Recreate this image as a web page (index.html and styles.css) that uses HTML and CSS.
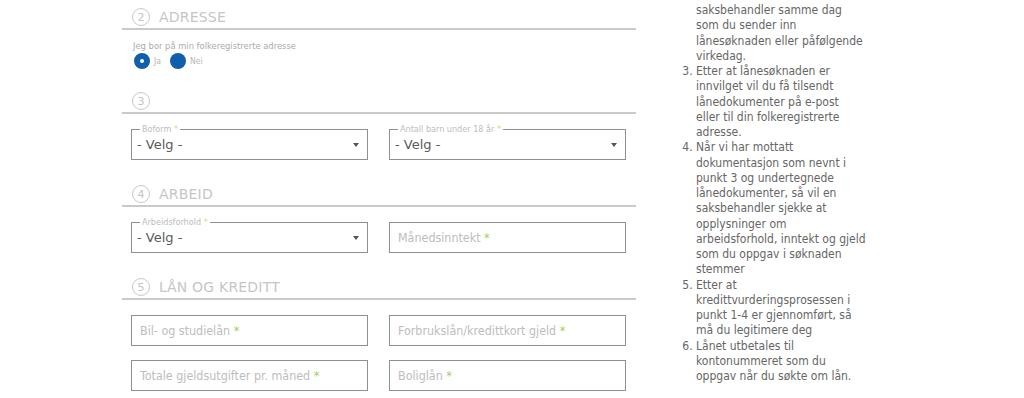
FILE: index.html
```html
<!DOCTYPE html>
<html lang="no">
<head>
<meta charset="utf-8">
<title>Lånesøknad</title>
<link rel="stylesheet" href="styles.css">
</head>
<body>
<div class="page">
  <form class="form">
    <div class="sec-head"><span class="num">2</span><h2>ADRESSE</h2></div>
    <p class="q">Jeg bor på min folkeregistrerte adresse</p>
    <div class="radios">
      <label class="radio"><span class="dot on"></span>Ja</label>
      <label class="radio"><span class="dot"></span>Nei</label>
    </div>

    <div class="sec-head"><span class="num">3</span></div>
    <div class="row">
      <div class="field select"><span class="flabel">Boform <b>*</b></span><span class="val">- Velg -</span><span class="caret"></span></div>
      <div class="field select"><span class="flabel">Antall barn under 18 år <b>*</b></span><span class="val">- Velg -</span><span class="caret"></span></div>
    </div>

    <div class="sec-head"><span class="num">4</span><h2>ARBEID</h2></div>
    <div class="row">
      <div class="field select"><span class="flabel">Arbeidsforhold <b>*</b></span><span class="val">- Velg -</span><span class="caret"></span></div>
      <div class="field"><span class="ph">Månedsinntekt <b>*</b></span></div>
    </div>

    <div class="sec-head"><span class="num">5</span><h2>LÅN OG KREDITT</h2></div>
    <div class="row">
      <div class="field"><span class="ph">Bil- og studielån <b>*</b></span></div>
      <div class="field"><span class="ph">Forbrukslån/kredittkort gjeld <b>*</b></span></div>
      <div class="field"><span class="ph">Totale gjeldsutgifter pr. måned <b>*</b></span></div>
      <div class="field"><span class="ph">Boliglån <b>*</b></span></div>
    </div>
  </form>

  <aside class="steps">
    <p class="cont">saksbehandler samme dag<br>som du sender inn<br>lånesøknaden eller påfølgende<br>virkedag.</p>
    <ol start="3">
      <li>Etter at lånesøknaden er<br>innvilget vil du få tilsendt<br>lånedokumenter på e-post<br>eller til din folkeregistrerte<br>adresse.</li>
      <li>Når vi har mottatt<br>dokumentasjon som nevnt i<br>punkt 3 og undertegnede<br>lånedokumenter, så vil en<br>saksbehandler sjekke at<br>opplysninger om<br>arbeidsforhold, inntekt og gjeld<br>som du oppgav i søknaden<br>stemmer</li>
      <li>Etter at<br>kredittvurderingsprosessen i<br>punkt 1-4 er gjennomført, så<br>må du legitimere deg</li>
      <li>Lånet utbetales til<br>kontonummeret som du<br>oppgav når du søkte om lån.</li>
    </ol>
  </aside>
</div>
</body>
</html>
```

FILE: styles.css
```css
body {
  margin: 0;
  background: #fff;
  font-family: "DejaVu Sans Condensed", "DejaVu Sans", sans-serif;
}

.page {
  display: flex;
  align-items: flex-start;
  padding-left: 122px;
}

.form {
  width: 514px;
  padding-top: 8px;
  margin: 0;
}

.sec-head {
  display: flex;
  align-items: center;
  gap: 9px;
  height: 18px;
  padding: 0 0 2px 10px;
  border-bottom: 2px solid #cacaca;
}

.num {
  width: 16px;
  height: 16px;
  border: 1px solid #c9c9c9;
  border-radius: 50%;
  display: flex;
  align-items: center;
  justify-content: center;
  font-family: "DejaVu Sans", sans-serif;
  font-size: 11px;
  color: #c4c4c4;
}

.sec-head h2 {
  margin: 0;
  font-family: "DejaVu Sans", sans-serif;
  font-weight: normal;
  font-size: 14px;
  color: #c6c6c6;
  letter-spacing: 0.2px;
}

.q {
  margin: 10px 0 0 11px;
  font-size: 9.3px;
  line-height: 11px;
  color: #ababab;
}

.radios {
  display: flex;
  gap: 9px;
  margin: 2px 0 23px 12px;
}

.radio {
  display: flex;
  align-items: center;
  gap: 4px;
  font-size: 8.5px;
  color: #b5b5b5;
  height: 16px;
}

.dot {
  width: 16px;
  height: 16px;
  box-sizing: border-box;
  border-radius: 50%;
  background: #0f5fae;
}

.dot.on {
  border: 6px solid #0f5fae;
  background: #fff;
}

.row {
  display: grid;
  grid-template-columns: 237px 237px;
  gap: 14px 21px;
  margin: 15px 0 25px 9px;
}

.row:last-child {
  margin-bottom: 0;
}

.field {
  position: relative;
  height: 31px;
  box-sizing: border-box;
  border: 1px solid #8f8f8f;
  display: flex;
  align-items: center;
  padding-left: 8px;
}

.field b {
  font-weight: normal;
  color: #9fd05a;
}

.ph {
  font-size: 12.4px;
  color: #bdbdbd;
}

.select {
  padding-left: 5px;
}

.val {
  font-family: "DejaVu Sans", sans-serif;
  font-size: 13px;
  color: #5a5a5a;
}

.caret {
  margin-left: auto;
  margin-right: 8px;
  width: 0;
  height: 0;
  border-top: 4px solid #555;
  border-left: 3px solid transparent;
  border-right: 3px solid transparent;
}

.flabel {
  position: absolute;
  top: -6px;
  left: 8px;
  padding: 0 2px;
  background: #fff;
  font-size: 9px;
  line-height: 11px;
  color: #bdbdbd;
}

.flabel b {
  color: #c3df86;
}

.steps {
  margin-left: 44px;
  padding-top: 3px;
  width: 200px;
  font-size: 12px;
  line-height: 15.25px;
  color: #666;
  white-space: nowrap;
}

.cont {
  margin: 0;
  padding-left: 16px;
}

.steps ol {
  margin: 0;
  padding-left: 16px;
}
```
